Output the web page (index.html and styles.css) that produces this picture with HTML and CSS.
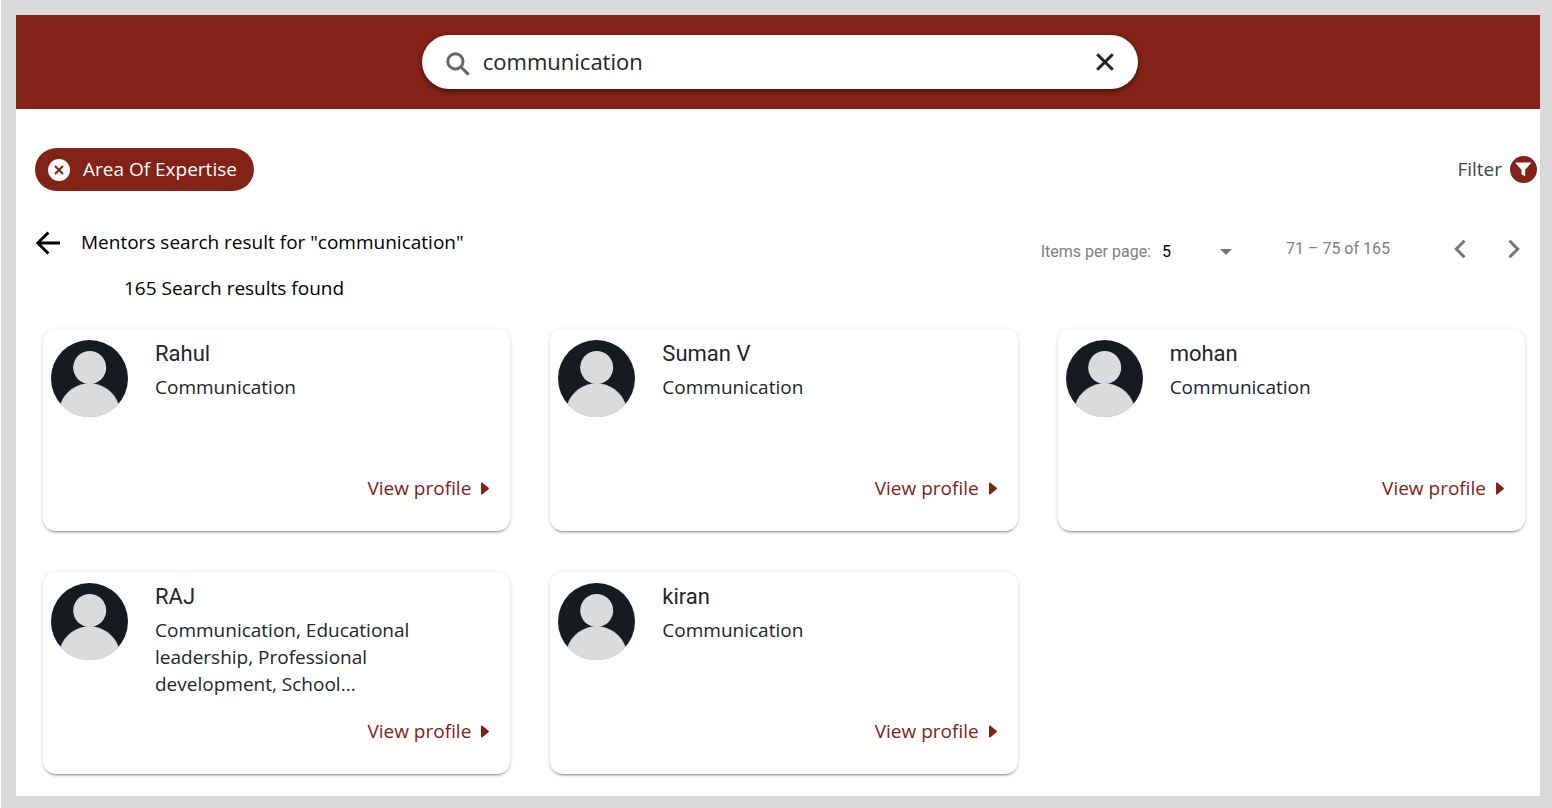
FILE: index.html
```html
<!DOCTYPE html>
<html lang="en">
<head>
<meta charset="utf-8">
<title>Mentor search</title>
<link rel="stylesheet" href="styles.css">
</head>
<body>
<svg class="sprite" aria-hidden="true">
  <symbol id="avatar" viewBox="0 0 77 77">
    <circle cx="38.5" cy="38.5" r="38.5" fill="#161b21"/>
    <circle cx="38.7" cy="27.5" r="16.5" fill="#dadbdd"/>
    <path d="M9.600 64.200A30.500 30.500 0 0 1 67.400 64.200A38.800 38.800 0 0 1 9.600 64.200z" fill="#dadbdd" stroke="#dadbdd" stroke-width=".5"/>
  </symbol>
  <symbol id="caret" viewBox="0 0 9 14"><path d="M0 1.2C0 .2.9-.1 1.6.5L8.5 6.2q.8.8 0 1.6L1.6 13.5C.9 14.1 0 13.8 0 12.8z" fill="currentColor"/></symbol>
</svg>
<div class="page">
  <header class="topbar">
    <form class="search" role="search">
      <svg class="search-icon" viewBox="0 0 24 24" aria-hidden="true"><circle cx="9.400" cy="9.400" r="7.600"/><path d="M14.500 14.500L22.600 22.600"/></svg>
      <input class="search-input" type="text" value="communication" aria-label="Search mentors">
      <button class="search-clear" type="button" aria-label="Clear search">
        <svg viewBox="0 0 18 18" aria-hidden="true"><path d="M1.200 1.200l15.600 15.600M16.800 1.200L1.200 16.800"/></svg>
      </button>
    </form>
  </header>
  <main class="content">
    <div class="filters">
      <button class="chip" type="button">
        <svg class="chip-icon" viewBox="0 0 22 22" aria-hidden="true"><circle cx="11" cy="11" r="11"/><path d="M7 7l8 8M15 7l-8 8"/></svg>
        Area Of Expertise
      </button>
      <button class="filter" type="button">
        Filter
        <svg class="filter-icon" viewBox="0 0 27 27" aria-hidden="true"><circle cx="13.500" cy="13.500" r="13.500"/><path d="M6.200 6.500h14.200q.9.100.3.900L15.200 13.800v6q-.1.600-.7.300l-2.600-1.500q-.4-.2-.4-.7v-4.100L5.800 7.400q-.5-.8.400-.9z"/></svg>
      </button>
    </div>
    <div class="results-head">
      <div class="summary">
        <div class="title-row">
          <button class="back" type="button" aria-label="Back">
            <svg viewBox="0 0 24 24" aria-hidden="true"><path d="M24 12H2M12.300 1.500L1.800 12l10.500 10.500"/></svg>
          </button>
          <h1 class="title">Mentors search result for "communication"</h1>
        </div>
        <p class="count">165 Search results found</p>
      </div>
      <nav class="paginator" aria-label="Pagination">
        <div class="page-size">
          <label for="size">Items per page:</label>
          <div class="select-wrap">
            <select id="size" class="select"><option>5</option><option>10</option></select>
            <svg class="select-arrow" viewBox="0 0 12 6" aria-hidden="true"><path d="M0 0h12L6 6z"/></svg>
          </div>
        </div>
        <span class="range">71 – 75 of 165</span>
        <div class="pager">
          <button class="page-button" type="button" aria-label="Previous page"><svg viewBox="0 0 12 20" aria-hidden="true"><path d="M10.500 1.800L2.300 10l8.200 8.200"/></svg></button>
          <button class="page-button" type="button" aria-label="Next page"><svg viewBox="0 0 12 20" aria-hidden="true"><path d="M1.500 1.800L9.700 10l-8.200 8.200"/></svg></button>
        </div>
      </nav>
    </div>
    <section class="cards" aria-label="Mentors">
      <article class="card">
        <svg class="avatar" aria-hidden="true"><use href="#avatar"/></svg>
        <div class="info"><h2 class="name">Rahul</h2><p class="skills">Communication</p></div>
        <a class="view" href="#">View profile <svg class="caret" aria-hidden="true"><use href="#caret"/></svg></a>
      </article>
      <article class="card">
        <svg class="avatar" aria-hidden="true"><use href="#avatar"/></svg>
        <div class="info"><h2 class="name">Suman V</h2><p class="skills">Communication</p></div>
        <a class="view" href="#">View profile <svg class="caret" aria-hidden="true"><use href="#caret"/></svg></a>
      </article>
      <article class="card">
        <svg class="avatar" aria-hidden="true"><use href="#avatar"/></svg>
        <div class="info"><h2 class="name">mohan</h2><p class="skills">Communication</p></div>
        <a class="view" href="#">View profile <svg class="caret" aria-hidden="true"><use href="#caret"/></svg></a>
      </article>
      <article class="card">
        <svg class="avatar" aria-hidden="true"><use href="#avatar"/></svg>
        <div class="info"><h2 class="name">RAJ</h2><p class="skills">Communication, Educational leadership, Professional development, School...</p></div>
        <a class="view" href="#">View profile <svg class="caret" aria-hidden="true"><use href="#caret"/></svg></a>
      </article>
      <article class="card">
        <svg class="avatar" aria-hidden="true"><use href="#avatar"/></svg>
        <div class="info"><h2 class="name">kiran</h2><p class="skills">Communication</p></div>
        <a class="view" href="#">View profile <svg class="caret" aria-hidden="true"><use href="#caret"/></svg></a>
      </article>
    </section>
  </main>
</div>
</body>
</html>
```

FILE: styles.css
```css
:root {
  --brand: #832216;
  --frame: #d9d9d9;
  --lift: 0 3px 1px -2px rgba(0, 0, 0, .2), 0 2px 2px rgba(0, 0, 0, .14), 0 1px 5px rgba(0, 0, 0, .12);
}
* { box-sizing: border-box; }
html { background: #fff; }
body {
  margin: 0;
  padding-left: 1px;
  font-family: "Open Sans", "Noto Sans", sans-serif;
  font-size: 19px;
  line-height: 27px;
  color: #212529;
}
h1, h2, p { margin: 0; font-weight: 400; }
button, input, select { font: inherit; color: inherit; margin: 0; padding: 0; border: 0; background: none; outline: 0; }
button { cursor: pointer; }
svg { display: block; flex: none; }
.sprite { position: absolute; width: 0; height: 0; }

.page {
  min-height: 100vh;
  border: solid var(--frame);
  border-width: 15px 12px 12px 15px;
  background: #fff;
}
.topbar {
  display: flex;
  justify-content: center;
  padding: 20px 0 20px 4px;
  background: var(--brand);
}
.search {
  display: flex;
  align-items: center;
  width: calc(47% + 2px);
  height: 54px;
  padding: 0 24px;
  border-radius: 27px;
  background: #fff;
  box-shadow: 0 2px 5px rgba(0, 0, 0, .5);
}
.search-icon { width: 24px; height: 24px; margin-top: 3px; fill: none; stroke: #666; stroke-width: 3; }
.search-input { flex: 1; min-width: 0; margin-left: 13px; padding-bottom: 2px; font-size: 22px; line-height: 30px; }
.search-clear svg { width: 18px; height: 18px; fill: none; stroke: #212529; stroke-width: 3; }

.filters {
  display: flex;
  justify-content: space-between;
  align-items: center;
  padding: 39px 3px 0 19px;
}
.chip {
  display: flex;
  align-items: center;
  gap: 13px;
  height: 43px;
  padding: 0 17px 0 13px;
  border-radius: 22px;
  background: var(--brand);
  color: #fff;
  font-weight: 500;
}
.chip-icon { width: 22px; height: 22px; fill: #fff; stroke: none; }
.chip-icon path { stroke: var(--brand); stroke-width: 2; }
.filter { display: flex; align-items: center; gap: 8px; color: #444; }
.filter-icon { width: 27px; height: 27px; fill: var(--brand); }
.filter-icon path { fill: #fff; }

.results-head {
  display: flex;
  justify-content: space-between;
  align-items: flex-start;
  padding: 38px 20px 0 20px;
  color: #000;
}
.title-row { display: flex; align-items: center; gap: 21px; }
.back svg { width: 24px; height: 24px; fill: none; stroke: #000; stroke-width: 3; }
.title { font-size: 19px; }
.count { padding: 19px 0 0 88px; }

.paginator {
  display: flex;
  align-items: center;
  padding-top: 3px;
  font-family: Roboto, sans-serif;
  font-size: 16px;
  color: #808080;
}
.page-size { display: flex; align-items: center; gap: 11px; padding-top: 6px; }
.select-wrap { position: relative; width: 70px; }
.select { display: block; width: 100%; appearance: none; color: #000; }
.select-arrow { position: absolute; right: 0; top: 50%; margin-top: -3px; width: 12px; height: 6px; fill: #757575; pointer-events: none; }
.range { margin: 0 43px 0 54px; }
.pager { display: flex; }
.page-button { width: 54px; padding: 0 21px; }
.page-button:last-child { width: 33px; padding-right: 0; }
.page-button svg { width: 12px; height: 20px; fill: none; stroke: #757575; stroke-width: 3; }

.cards {
  display: grid;
  grid-template-columns: repeat(3, minmax(0, 1fr));
  gap: 41px 40px;
  padding: 27px 15px 22px 27px;
}
.card {
  display: grid;
  grid-template-columns: 77px minmax(0, 1fr);
  column-gap: 27px;
  row-gap: 20px;
  padding: 11px 21px 29px 8px;
  border-radius: 13px;
  background: #fff;
  box-shadow: var(--lift);
}
.avatar { width: 77px; height: 77px; }
.info { max-width: 280px; }
.name { font-family: Roboto, sans-serif; font-size: 22px; }
.skills { margin-top: 7px; min-height: 81px; }
.view {
  grid-column: 1 / -1;
  justify-self: end;
  display: flex;
  align-items: center;
  gap: 10px;
  color: var(--brand);
  text-decoration: none;
}
.caret { width: 8px; height: 13px; }
```
